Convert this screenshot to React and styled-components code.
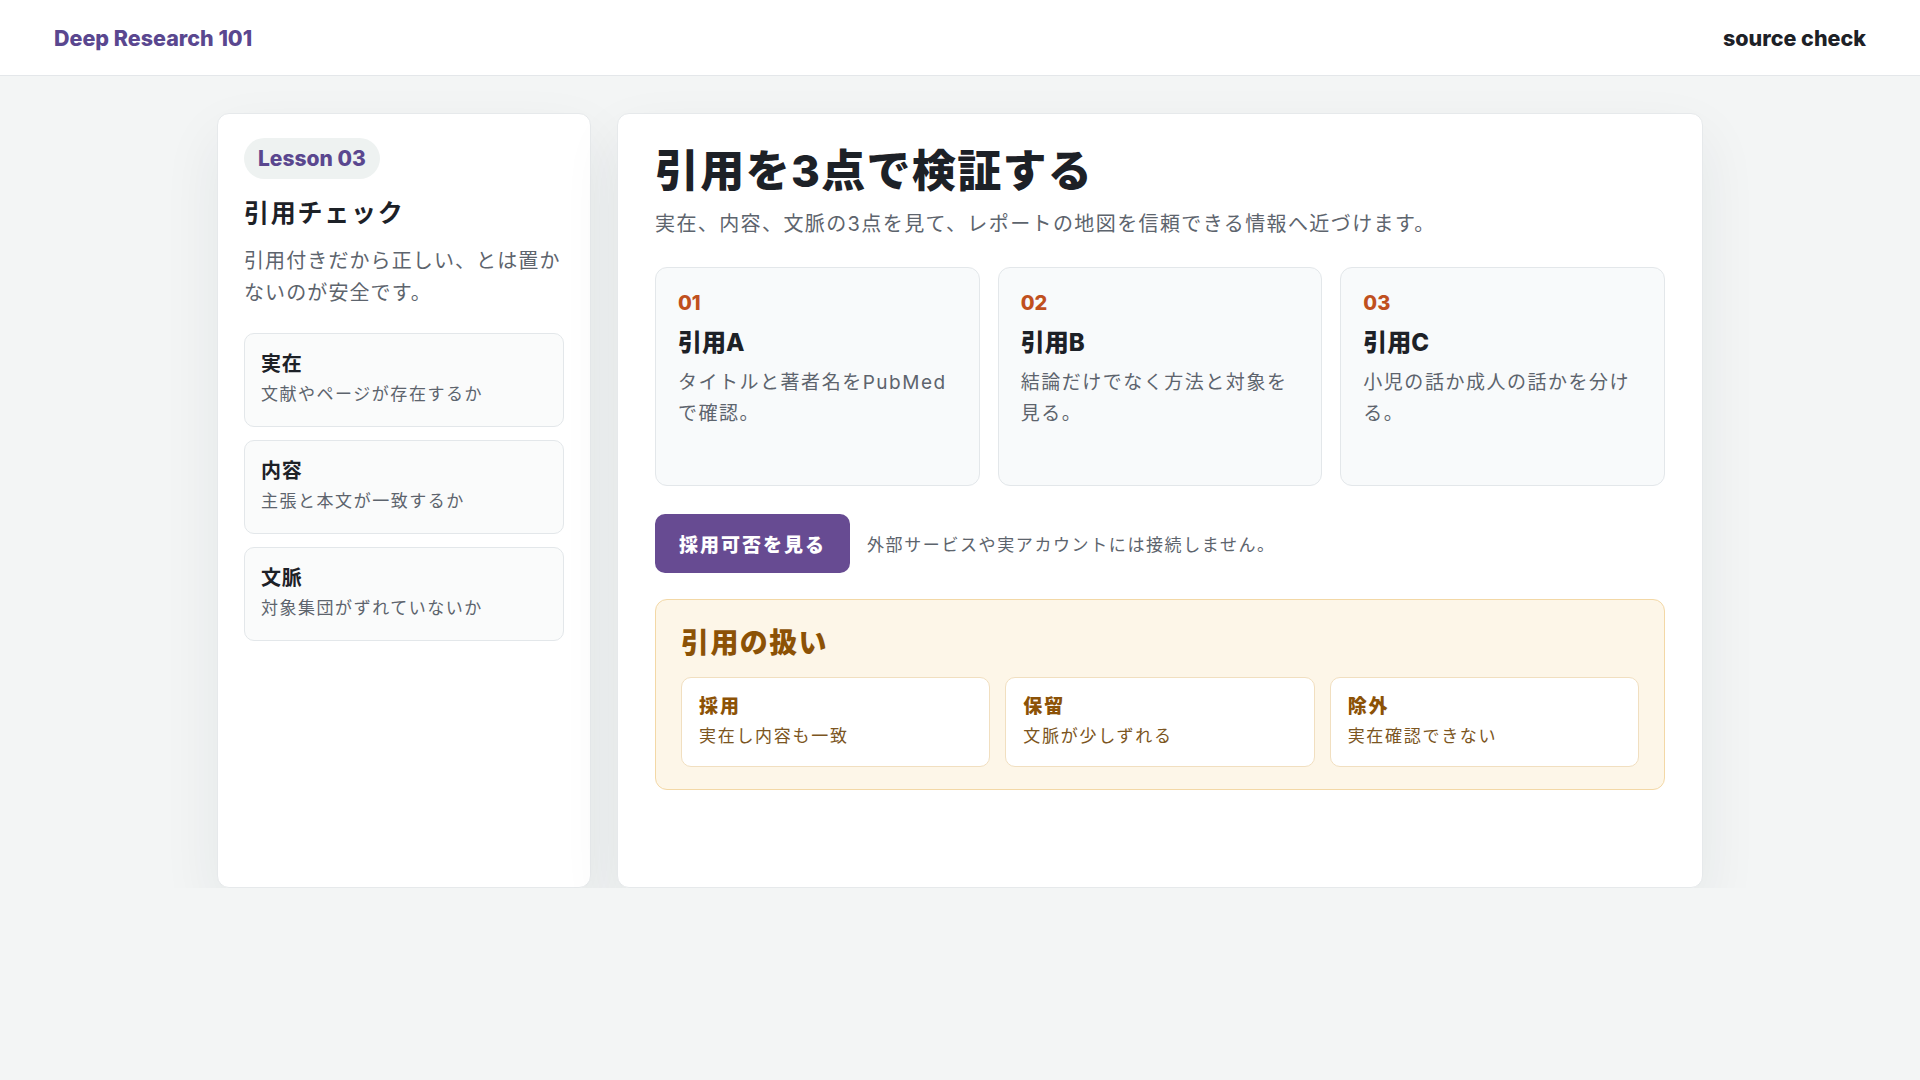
import React from 'react'
import styled, { createGlobalStyle } from 'styled-components'

const GlobalStyle = createGlobalStyle`
  * { box-sizing: border-box; }
  body {
    margin: 0;
    background: #f3f5f5;
    font-family: Inter, "Noto Sans CJK JP", sans-serif;
    color: #1d2127;
  }
`

const Header = styled.header`
  height: 76px;
  background: #ffffff;
  border-bottom: 1px solid #e4e7ea;
  display: flex;
  align-items: center;
  justify-content: space-between;
  padding: 0 54px;
`
const Logo = styled.div`
  font-size: 21.5px;
  font-weight: 800;
  color: #5a478f;
`
const HeaderLink = styled.div`
  font-size: 21.5px;
  font-weight: 800;
  color: #1d2127;
`

const Main = styled.main`
  width: 1486px;
  margin: 37px auto 0;
  display: grid;
  grid-template-columns: 374px 1fr;
  gap: 26px;
  min-height: 775px;
`

const Panel = styled.section`
  background: #ffffff;
  border: 1px solid #e6e9eb;
  border-radius: 12px;
  box-shadow: 0 24px 60px rgba(30, 40, 50, 0.07);
  padding: ${p => p.$pad};
`

const Pill = styled.span`
  display: inline-flex;
  align-items: center;
  height: 41px;
  padding: 0 14px;
  border-radius: 21px;
  background: #eef2f1;
  color: #5a478f;
  font-size: 21px;
  font-weight: 800;
`
const SideTitle = styled.h2`
  margin: 17px 0 0;
  font-size: 25px;
  line-height: 34px;
  font-weight: 700;
  letter-spacing: 0.07em;
`
const SideText = styled.p`
  margin: 15px 0 0;
  font-size: 20px;
  line-height: 32px;
  letter-spacing: 0.055em;
  color: #5d646d;
`
const CheckList = styled.div`
  margin-top: 24px;
  display: flex;
  flex-direction: column;
  gap: 13px;
`
const CheckItem = styled.div`
  height: 94px;
  border: 1px solid #e3e7ea;
  border-radius: 10px;
  background: #fafbfb;
  padding: 16px 16px;
`
const CheckName = styled.div`
  font-size: 20px;
  line-height: 28px;
  font-weight: 700;
  letter-spacing: 0.04em;
`
const CheckSub = styled.div`
  margin-top: 3px;
  font-size: 17px;
  line-height: 26px;
  letter-spacing: 0.09em;
  color: #5d646d;
`

const Title = styled.h1`
  margin: 0;
  font-size: 44px;
  line-height: 56px;
  font-weight: 800;
  letter-spacing: 0.03em;
`
const Lead = styled.p`
  margin: 11px 0 0;
  font-size: 20px;
  line-height: 29px;
  letter-spacing: 0.07em;
  color: #5d646d;
`
const StepGrid = styled.div`
  margin-top: 28px;
  display: grid;
  grid-template-columns: repeat(3, 1fr);
  gap: 18px;
`
const StepCard = styled.div`
  min-height: 219px;
  border: 1px solid #e3e7ea;
  border-radius: 12px;
  background: #f8fafb;
  padding: 22px 22px;
`
const StepNo = styled.div`
  font-size: 20px;
  line-height: 26px;
  font-weight: 800;
  color: #c0501e;
`
const StepName = styled.div`
  margin-top: 11px;
  font-size: 24px;
  line-height: 32px;
  font-weight: 800;
`
const StepText = styled.p`
  margin: 8px 0 0;
  font-size: 19px;
  line-height: 31px;
  letter-spacing: 0.08em;
  color: #5d646d;
`

const ActionRow = styled.div`
  margin-top: 28px;
  display: flex;
  align-items: center;
  gap: 17px;
`
const Button = styled.button`
  height: 59px;
  padding: 0 24px;
  border: 0;
  border-radius: 10px;
  background: #674b92;
  color: #ffffff;
  font-family: inherit;
  font-size: 19px;
  font-weight: 800;
  letter-spacing: 2px;
  cursor: pointer;
`
const Note = styled.span`
  font-size: 17px;
  letter-spacing: 1.6px;
  color: #5d646d;
`

const Verdict = styled.div`
  margin-top: 26px;
  border: 1px solid #f3d8a6;
  border-radius: 12px;
  background: #fdf6e8;
  padding: 25px 25px 22px;
`
const VerdictTitle = styled.h3`
  margin: 0;
  font-size: 28px;
  line-height: 36px;
  font-weight: 800;
  color: #8c5206;
  letter-spacing: 1.4px;
`
const VerdictGrid = styled.div`
  margin-top: 16px;
  display: grid;
  grid-template-columns: repeat(3, 1fr);
  gap: 15px;
`
const VerdictItem = styled.div`
  height: 90px;
  background: #ffffff;
  border: 1px solid #f1dfc0;
  border-radius: 10px;
  padding: 15px 17px;
`
const VerdictName = styled.div`
  font-size: 19px;
  line-height: 28px;
  font-weight: 800;
  color: #8c5206;
  letter-spacing: 0.1em;
`
const VerdictSub = styled.div`
  margin-top: 2px;
  font-size: 17px;
  line-height: 26px;
  letter-spacing: 1.7px;
  color: #7b5521;
`

const checks = [
  ['実在', '文献やページが存在するか'],
  ['内容', '主張と本文が一致するか'],
  ['文脈', '対象集団がずれていないか'],
]
const steps = [
  ['01', '引用A', 'タイトルと著者名をPubMedで確認。'],
  ['02', '引用B', '結論だけでなく方法と対象を見る。'],
  ['03', '引用C', '小児の話か成人の話かを分ける。'],
]
const verdicts = [
  ['採用', '実在し内容も一致'],
  ['保留', '文脈が少しずれる'],
  ['除外', '実在確認できない'],
]

export default function App() {
  return (
    <>
      <GlobalStyle />
      <Header>
        <Logo>Deep Research 101</Logo>
        <HeaderLink>source check</HeaderLink>
      </Header>
      <Main>
        <Panel $pad="24px 26px">
          <Pill>Lesson 03</Pill>
          <SideTitle>引用チェック</SideTitle>
          <SideText>引用付きだから正しい、とは置かないのが安全です。</SideText>
          <CheckList>
            {checks.map(([name, sub]) => (
              <CheckItem key={name}>
                <CheckName>{name}</CheckName>
                <CheckSub>{sub}</CheckSub>
              </CheckItem>
            ))}
          </CheckList>
        </Panel>
        <Panel $pad="29px 37px">
          <Title>引用を3点で検証する</Title>
          <Lead>実在、内容、文脈の3点を見て、レポートの地図を信頼できる情報へ近づけます。</Lead>
          <StepGrid>
            {steps.map(([no, name, text]) => (
              <StepCard key={no}>
                <StepNo>{no}</StepNo>
                <StepName>{name}</StepName>
                <StepText>{text}</StepText>
              </StepCard>
            ))}
          </StepGrid>
          <ActionRow>
            <Button>採用可否を見る</Button>
            <Note>外部サービスや実アカウントには接続しません。</Note>
          </ActionRow>
          <Verdict>
            <VerdictTitle>引用の扱い</VerdictTitle>
            <VerdictGrid>
              {verdicts.map(([name, sub]) => (
                <VerdictItem key={name}>
                  <VerdictName>{name}</VerdictName>
                  <VerdictSub>{sub}</VerdictSub>
                </VerdictItem>
              ))}
            </VerdictGrid>
          </Verdict>
        </Panel>
      </Main>
    </>
  )
}
